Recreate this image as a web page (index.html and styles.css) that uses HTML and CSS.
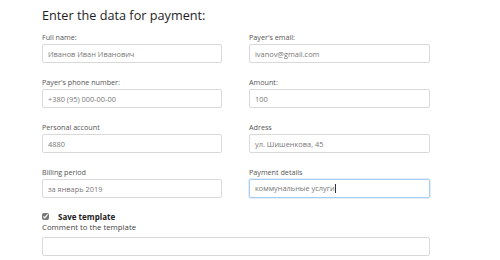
FILE: index.html
```
<!DOCTYPE html>
<html>
<head>
    <meta charset="utf-8">
    <title>Payment</title>
    <link rel="stylesheet" href="styles.css">
</head>
<body>
    <div class="payment">
        <h3 class="title">Enter the data for payment:</h3>
        <div class="fields">
            <div class="field">
                <label>Full name:</label>
                <input type="text" value="Иванов Иван Иванович">
            </div>
            <div class="field">
                <label>Payer's email:</label>
                <input type="text" value="ivanov@gmail.com">
            </div>
            <div class="field">
                <label>Payer's phone number:</label>
                <input type="text" value="+380 (95) 000-00-00">
            </div>
            <div class="field">
                <label>Amount:</label>
                <input type="text" value="100">
            </div>
            <div class="field">
                <label>Personal account</label>
                <input type="text" value="4880">
            </div>
            <div class="field">
                <label>Adress</label>
                <input type="text" value="ул. Шишенкова, 45">
            </div>
            <div class="field">
                <label>Billing period</label>
                <input type="text" value="за январь 2019">
            </div>
            <div class="field">
                <label>Payment details</label>
                <div class="input focus">коммунальные услуги<span class="caret"></span></div>
            </div>
        </div>
        <div class="save">
            <input type="checkbox" checked>
            <span>Save template</span>
        </div>
        <label class="comment-label">Comment to the template</label>
        <input type="text" class="comment">
    </div>
</body>
</html>
```
FILE: styles.css
```
body{
    margin: 0;
    font-family: "Open Sans", "Noto Sans", sans-serif;
    background: #fff;
    color: #333;
}
.payment{
    width: 388px;
    margin-left: 42px;
    padding-top: 5px;
}
.title{
    margin: 0 0 7px;
    font-size: 12.7px;
    line-height: 20px;
    font-weight: 500;
    color: #1e1e1e;
}
.fields{
    display: grid;
    grid-template-columns: 180px 181px;
    column-gap: 27px;
}
.field{
    display: flex;
    flex-direction: column;
    gap: 2px;
    margin-bottom: 14px;
}
label{
    font-size: 7.2px;
    line-height: 10px;
    color: #555;
}
input[type=text], .input{
    box-sizing: border-box;
    height: 19px;
    width: 100%;
    margin: 0;
    padding: 0 5px;
    border: 1px solid #d9d9d9;
    border-radius: 2px;
    font-family: inherit;
    font-size: 7.4px;
    line-height: 17px;
    color: #777;
    background: #fff;
}
.focus{
    border-color: #a9cdef;
    box-shadow: 0 0 0 1px #e3eefa;
}
.caret{
    display: inline-block;
    width: 1px;
    height: 9px;
    background: #333;
    vertical-align: -2px;
}
.save{
    display: flex;
    align-items: center;
    height: 10px;
    margin-top: -1px;
}
.save input{
    width: 7px;
    height: 7px;
    margin: 0 9px 0 0;
    accent-color: #777;
}
.save span{
    font-size: 8px;
    font-weight: bold;
    color: #222;
}
.comment-label{
    display: block;
    margin-top: 1px;
    font-size: 7.8px;
    color: #444;
}
.comment{
    margin-top: 1px !important;
}
```
